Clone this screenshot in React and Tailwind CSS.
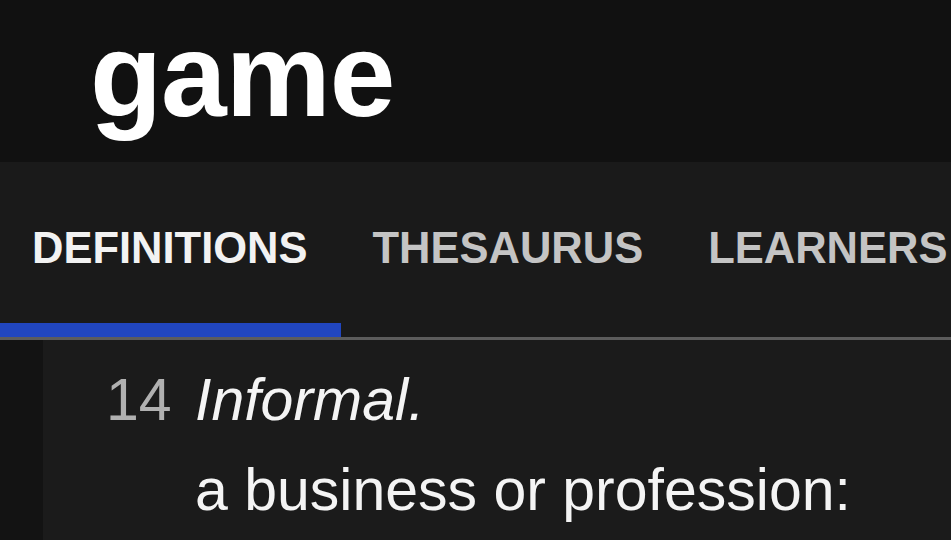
const tabs = [
    { label: 'DEFINITIONS', active: true },
    { label: 'THESAURUS', active: false },
    { label: 'LEARNERS', active: false },
];

const App = () => {
    return (
        <div className="w-[951px] h-[540px] overflow-hidden bg-[#1b1b1b] font-['Liberation_Sans',Arial,sans-serif]">
            {/* Word header */}
            <header className="h-[162px] bg-[#111111] pl-[90px] pt-[16px]">
                <h1 className="text-[118px] leading-none font-bold text-white tracking-[-1px]">game</h1>
            </header>

            {/* Tabs */}
            <nav className="flex bg-[#1a1a1a] border-b-[3px] border-[#5c5c5c] whitespace-nowrap">
                {tabs.map((tab) => (
                    <div
                        key={tab.label}
                        className={`shrink-0 pl-[32px] pr-[33px] pt-[65px] pb-[52px] text-[43.5px] leading-none font-bold border-b-[14px] ${
                            tab.active ? 'text-[#f2f2f2] border-[#2146bf]' : 'text-[#c4c4c4] border-transparent'
                        }`}
                    >
                        {tab.label}
                    </div>
                ))}
            </nav>

            {/* Definition */}
            <div className="flex">
                <div className="w-[43px] h-[300px] bg-[#131313]" />
                <div className="flex-1 pt-[15px] text-[59px] leading-[90px] text-[#f4f4f4]">
                    <div className="flex">
                        <span className="w-[152px] pl-[63px] text-[#b0b0b0]">14</span>
                        <span className="italic">Informal.</span>
                    </div>
                    <p className="pl-[152px]">a business or profession:</p>
                </div>
            </div>
        </div>
    );
};

export default App;
